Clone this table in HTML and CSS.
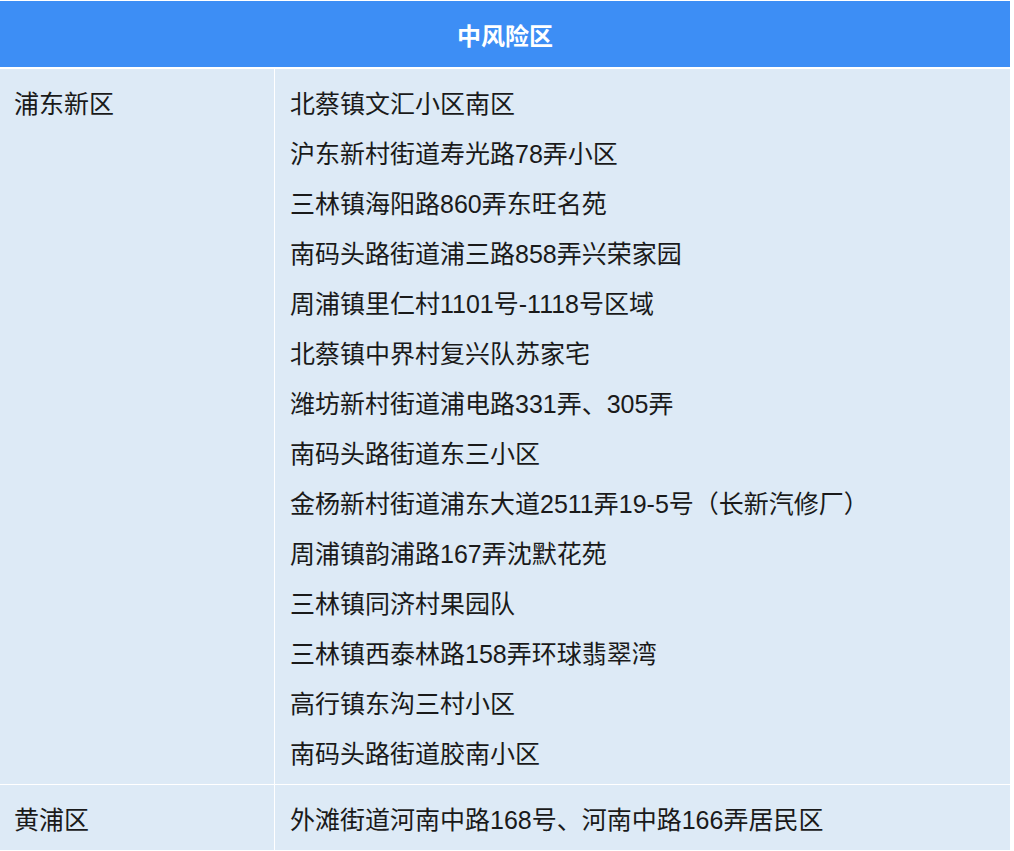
FILE: index.html
```html
<!DOCTYPE html>
<html lang="zh-CN">
<head>
<meta charset="utf-8">
<title>中风险区</title>
<link rel="stylesheet" href="styles.css">
</head>
<body>
<div class="table">
  <div class="head">中风险区</div>
  <div class="row">
    <div class="cell district">浦东新区</div>
    <div class="cell places">
      <div class="place">北蔡镇文汇小区南区</div>
      <div class="place">沪东新村街道寿光路78弄小区</div>
      <div class="place">三林镇海阳路860弄东旺名苑</div>
      <div class="place">南码头路街道浦三路858弄兴荣家园</div>
      <div class="place">周浦镇里仁村1101号-1118号区域</div>
      <div class="place">北蔡镇中界村复兴队苏家宅</div>
      <div class="place">潍坊新村街道浦电路331弄、305弄</div>
      <div class="place">南码头路街道东三小区</div>
      <div class="place">金杨新村街道浦东大道2511弄19-5号（长新汽修厂）</div>
      <div class="place">周浦镇韵浦路167弄沈默花苑</div>
      <div class="place">三林镇同济村果园队</div>
      <div class="place">三林镇西泰林路158弄环球翡翠湾</div>
      <div class="place">高行镇东沟三村小区</div>
      <div class="place">南码头路街道胶南小区</div>
    </div>
  </div>
  <div class="row">
    <div class="cell district">黄浦区</div>
    <div class="cell places">
      <div class="place">外滩街道河南中路168号、河南中路166弄居民区</div>
    </div>
  </div>
</div>
</body>
</html>
```

FILE: styles.css
```css
html, body {
  margin: 0;
  padding: 0;
  background: #ffffff;
}
body {
  font-family: "Liberation Sans", "Noto Sans CJK SC", sans-serif;
  color: #1a1a1a;
}
.table {
  width: 1010px;
  margin-top: 1px;
  display: flex;
  flex-direction: column;
  gap: 1px;
  background: #ffffff;
}
.head {
  height: 66px;
  margin-bottom: 1px;
  background: #3d8ef5;
  color: #ffffff;
  font-size: 24px;
  font-weight: bold;
  display: flex;
  align-items: center;
  justify-content: center;
}
.row {
  display: grid;
  grid-template-columns: 274px 1fr;
  column-gap: 1px;
}
.cell {
  background: #ddeaf6;
  font-size: 25px;
  line-height: 50px;
  padding-top: 10px;
  padding-bottom: 5px;
}
.district {
  padding-left: 14px;
}
.places {
  padding-left: 15px;
}
```
